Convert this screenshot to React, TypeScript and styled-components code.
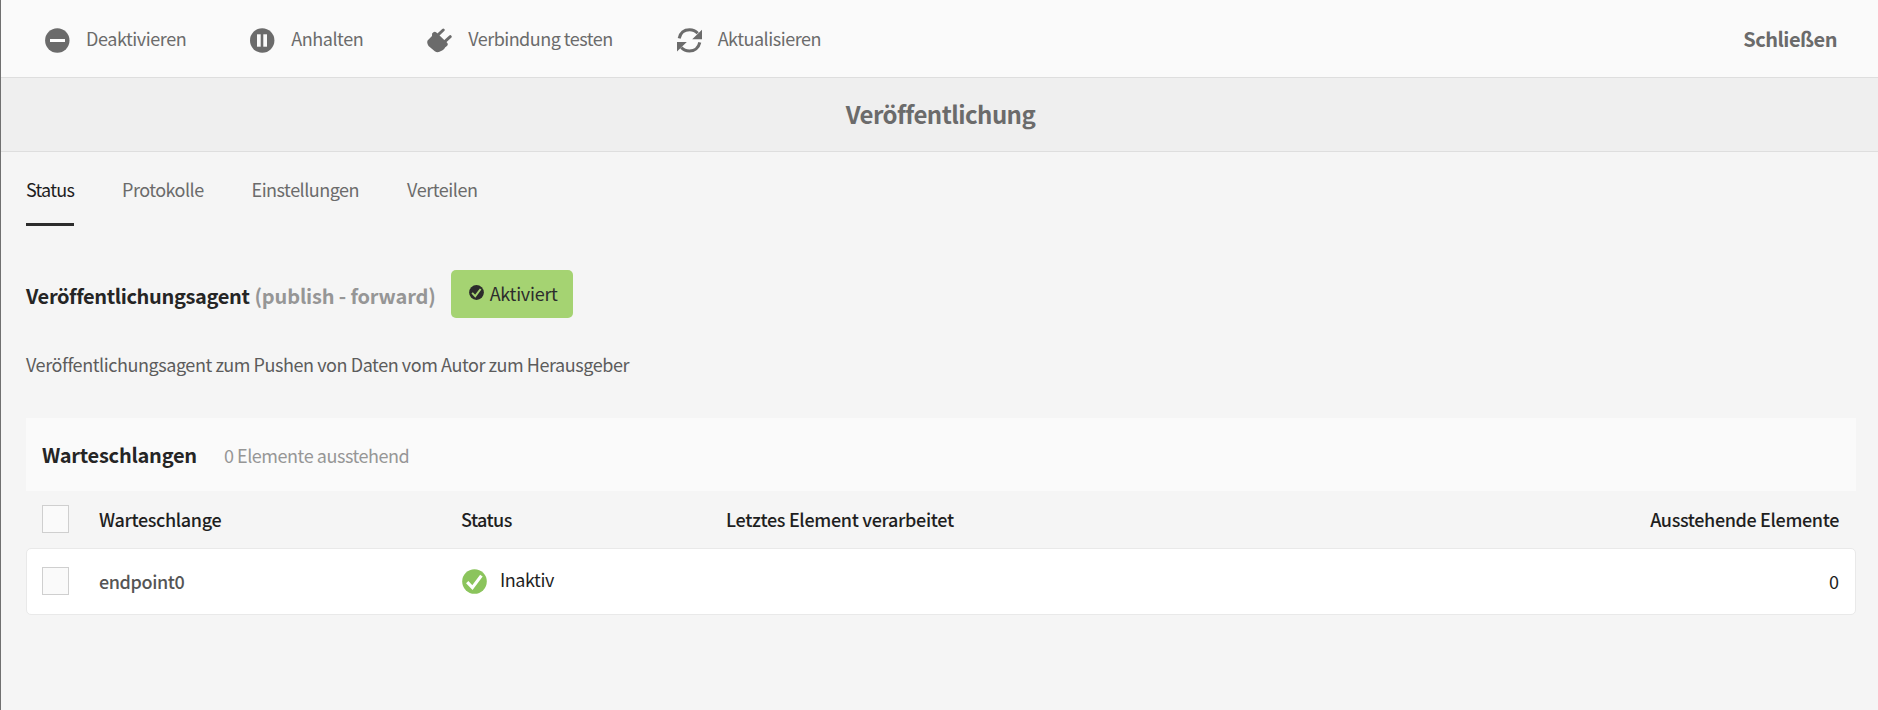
import React from 'react';
import styled, { createGlobalStyle } from 'styled-components';

const GlobalStyle = createGlobalStyle`
  * { box-sizing: border-box; }
  html, body { margin: 0; background: #f5f5f5; }
  body, button { font-family: "Noto Sans CJK SC", "Noto Sans", sans-serif; font-size: 18px; }
  button { margin: 0; padding: 0; border: 0; background: none; cursor: pointer; }
`;

const Page = styled.div`
  display: flex;
  flex-direction: column;
  min-height: 710px;
  border-left: 1px solid #707070;
  background: #f5f5f5;
`;

const Label = styled.span<{ $track?: number }>`
  letter-spacing: ${p => p.$track ?? -0.42}px;
  white-space: pre;
`;

const Toolbar = styled.header`
  display: flex;
  align-items: center;
  height: 78px;
  padding: 0 41px 0 44px;
  border-bottom: 1px solid #dedede;
  background: #fafafa;
  color: #6b6b6b;
`;

const Actions = styled.div`
  display: flex;
  gap: 64px;
`;

const ActionButton = styled.button`
  display: flex;
  align-items: center;
  gap: 16px;
  padding-bottom: 2px;
  color: inherit;
  line-height: 26px;

  svg {
    position: relative;
    top: 3px;
  }
`;

const CloseButton = styled.button`
  margin-left: auto;
  color: #6b6b6b;
  font-size: 20px;
  font-weight: 700;
  line-height: 26px;
`;

const TitleBar = styled.div`
  height: 74px;
  padding-left: 2px;
  border-bottom: 1px solid #dedede;
  background: #efefef;
  text-align: center;
`;

const Title = styled.h1`
  margin: 0;
  color: #6b6b6b;
  font-size: 24px;
  font-weight: 700;
  line-height: 71px;
`;

const Content = styled.main`
  padding: 25px 22px 0 25px;
`;

const Tabs = styled.nav`
  display: flex;
  gap: 48px;
`;

const Tab = styled.button<{ $active?: boolean }>`
  height: 49px;
  padding-bottom: 22px;
  border-bottom: 3px solid ${p => (p.$active ? '#2c2c2c' : 'transparent')};
  color: ${p => (p.$active ? '#1e1e1e' : '#6b6b6b')};
  line-height: 24px;
`;

const AgentRow = styled.div`
  display: flex;
  align-items: center;
  height: 48px;
  margin-top: 44px;
`;

const AgentName = styled.h2`
  margin: 0;
  padding-top: 3px;
  color: #252525;
  font-size: 20px;
  font-weight: 700;
  line-height: 28px;
`;

const AgentId = styled.span`
  margin-left: 5px;
  color: #969696;
`;

const Badge = styled.span`
  display: flex;
  align-items: center;
  gap: 6px;
  width: 122px;
  height: 48px;
  margin-left: 15px;
  padding: 0 0 3px 18px;
  border-radius: 5px;
  background: #a5d372;
  color: #2c2c2c;
`;

const Description = styled.p`
  margin: 34px 0 0;
  color: #5c5c5c;
  line-height: 24px;
`;

const Panel = styled.section`
  margin-top: 42px;
`;

const PanelHeader = styled.div`
  display: flex;
  align-items: center;
  gap: 27px;
  height: 73px;
  padding-left: 16px;
  background: #fafafa;
`;

const PanelTitle = styled.h3`
  margin: 0;
  color: #252525;
  font-size: 20px;
  font-weight: 700;
  line-height: 28px;
`;

const PanelCount = styled.span`
  color: #969696;
`;

const TableRow = styled.div`
  display: grid;
  grid-template-columns: 57px 362px 265px 1fr auto;
  align-items: center;
  color: #1f1f1f;
  line-height: 26px;
`;

const HeadRow = styled(TableRow)`
  height: 57px;
  padding: 0 17px 2px 16px;
  font-weight: 500;
`;

const BodyRow = styled(TableRow)`
  height: 67px;
  padding: 0 16px 1px 15px;
  border: 1px solid #e9e9e9;
  border-radius: 5px;
  background: #fff;
`;

const Checkbox = styled.span`
  width: 27px;
  height: 28px;
  border: 1px solid #cfcfcf;
  background: #fafafa;
`;

const QueueName = styled.span`
  color: #555;
  font-weight: 500;
`;

const QueueStatus = styled.span`
  display: flex;
  align-items: center;
  gap: 13px;
  padding-left: 1px;
`;

const StatusText = styled.span`
  padding-bottom: 4px;
`;

const MinusIcon = () => (
  <svg width="25" height="25" viewBox="0 0 25 25">
    <circle cx="12.3" cy="12.5" r="12.2" fill="#6b6b6b" />
    <rect x="5" y="11" width="15" height="3" fill="#fff" />
  </svg>
);

const PauseIcon = () => (
  <svg width="25" height="25" viewBox="0 0 25 25">
    <circle cx="12.2" cy="12.5" r="12.2" fill="#6b6b6b" />
    <rect x="7" y="6.3" width="3.7" height="12.4" fill="#fafafa" />
    <rect x="13.3" y="6.3" width="3.7" height="12.4" fill="#fafafa" />
  </svg>
);

const PlugIcon = () => (
  <svg width="25" height="25" viewBox="0 0 26 25" fill="#6b6b6b">
    <path d="M5.3 5.2 Q7.4 2.4 9.8 4.1 L20.9 14.8 Q22.2 16.3 21.2 17.6 L19.8 19 L19 19.6 Q18 21.6 16.2 22.6 L13 24.3 Q10.5 25.6 8.1 23.6 L1.6 18.2 Q-.5 15.4 .6 12.4 L5.2 7.7 Z" />
    <path d="M11.5 6.6 L16.9 1.6 M18.5 13.6 L24.2 8.5" stroke="#6b6b6b" strokeWidth="3" strokeLinecap="round" />
  </svg>
);

const RefreshIcon = () => (
  <svg width="25" height="25" viewBox="0 0 25 25">
    <path d="M2.2 10.4 C3.4 4.6 7.6 1.8 12.6 1.8 C16 1.8 18.6 3 20.7 5.3 M22.8 14.4 C21.6 20 17.4 23.1 12.4 23.1 C9 23.1 6.4 21.9 4.3 19.6" fill="none" stroke="#6b6b6b" strokeWidth="3" />
    <path d="M25 1.8 V11.2 H15.2 Z M0 23.4 V13.9 H9.8 Z" fill="#6b6b6b" />
  </svg>
);

const CheckIcon = ({ size, color, mark }: { size: number; color: string; mark: string }) => (
  <svg width={size} height={size} viewBox="0 0 25 25">
    <circle cx="12.5" cy="12.5" r="12.3" fill={color} />
    <path d="M5.2 13.2 L10.4 18.6 L19.4 6.6" fill="none" stroke={mark} strokeWidth="3.2" />
  </svg>
);

const actions = [
  { label: 'Deaktivieren', track: -0.44, Icon: MinusIcon },
  { label: 'Anhalten', track: -0.45, Icon: PauseIcon },
  { label: 'Verbindung testen', track: -0.52, Icon: PlugIcon },
  { label: 'Aktualisieren', track: -0.47, Icon: RefreshIcon },
];

const tabs = [
  { label: 'Status', track: -0.75 },
  { label: 'Protokolle', track: -0.54 },
  { label: 'Einstellungen', track: -0.5 },
  { label: 'Verteilen', track: -0.45 },
];

export default function App() {
  return (
    <Page>
      <GlobalStyle />
      <Toolbar>
        <Actions>
          {actions.map(({ label, track, Icon }) => (
            <ActionButton key={label}>
              <Icon />
              <Label $track={track}>{label}</Label>
            </ActionButton>
          ))}
        </Actions>
        <CloseButton><Label $track={-0.5}>Schließen</Label></CloseButton>
      </Toolbar>
      <TitleBar>
        <Title><Label $track={-0.55}>Veröffentlichung</Label></Title>
      </TitleBar>
      <Content>
        <Tabs>
          {tabs.map(({ label, track }, i) => (
            <Tab key={label} $active={i === 0}><Label $track={track}>{label}</Label></Tab>
          ))}
        </Tabs>
        <AgentRow>
          <AgentName>
            <Label $track={-0.36}>Veröffentlichungsagent</Label>
            <AgentId><Label $track={-0.15}>(publish - forward)</Label></AgentId>
          </AgentName>
          <Badge>
            <CheckIcon size={15} color="#2c2c2c" mark="#a5d372" />
            <Label $track={-0.25}>Aktiviert</Label>
          </Badge>
        </AgentRow>
        <Description>
          <Label $track={-0.435}>Veröffentlichungsagent zum Pushen von Daten vom Autor zum Herausgeber</Label>
        </Description>
        <Panel>
          <PanelHeader>
            <PanelTitle><Label $track={-0.25}>Warteschlangen</Label></PanelTitle>
            <PanelCount><Label $track={-0.45}>0 Elemente ausstehend</Label></PanelCount>
          </PanelHeader>
          <HeadRow>
            <Checkbox />
            <Label $track={-0.35}>Warteschlange</Label>
            <Label $track={-0.55}>Status</Label>
            <Label $track={-0.32}>Letztes Element verarbeitet</Label>
            <Label $track={-0.36}>Ausstehende Elemente</Label>
          </HeadRow>
          <BodyRow>
            <Checkbox />
            <QueueName><Label $track={-0.4}>endpoint0</Label></QueueName>
            <QueueStatus>
              <CheckIcon size={25} color="#8bc45c" mark="#fff" />
              <StatusText><Label $track={-0.45}>Inaktiv</Label></StatusText>
            </QueueStatus>
            <span />
            <Label $track={0}>0</Label>
          </BodyRow>
        </Panel>
      </Content>
    </Page>
  );
}
